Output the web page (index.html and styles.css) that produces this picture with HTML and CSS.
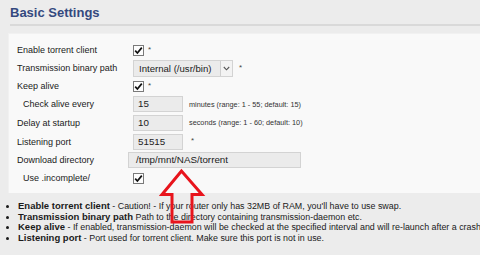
FILE: index.html
```html
<!DOCTYPE html>
<html>
<head>
<meta charset="utf-8">
<link rel="stylesheet" href="styles.css">
</head>
<body>
<div class="page">
  <h1 class="title">Basic Settings</h1>
  <div class="rule"></div>
  <div class="panel">
    <div class="form">
      <div class="label">Enable torrent client</div>
      <div class="field"><span class="chk"><svg viewBox="0 0 9 9" width="9" height="9"><path d="M1.2 4.6 L3.4 7 L7.8 1.6" fill="none" stroke="#111" stroke-width="1.7"/></svg></span><span class="req">*</span></div>

      <div class="label">Transmission binary path</div>
      <div class="field"><span class="select"><span class="select-text">Internal (/usr/bin)</span><span class="select-btn"><svg viewBox="0 0 7 5" width="7" height="5"><path d="M0.8 1 L3.5 3.8 L6.2 1" fill="none" stroke="#555" stroke-width="1.1"/></svg></span></span><span class="req">*</span></div>

      <div class="label">Keep alive</div>
      <div class="field"><span class="chk"><svg viewBox="0 0 9 9" width="9" height="9"><path d="M1.2 4.6 L3.4 7 L7.8 1.6" fill="none" stroke="#111" stroke-width="1.7"/></svg></span><span class="req">*</span></div>

      <div class="label sub">Check alive every</div>
      <div class="field"><span class="input short">15</span><span class="hint">minutes (range: 1 - 55; default: 15)</span></div>

      <div class="label">Delay at startup</div>
      <div class="field"><span class="input short">10</span><span class="hint">seconds (range: 1 - 60; default: 10)</span></div>

      <div class="label">Listening port</div>
      <div class="field"><span class="input short">51515</span><span class="req">*</span></div>

      <div class="label">Download directory</div>
      <div class="field"><span class="input long">/tmp/mnt/NAS/torrent</span></div>

      <div class="label sub">Use .incomplete/</div>
      <div class="field"><span class="chk"><svg viewBox="0 0 9 9" width="9" height="9"><path d="M1.2 4.6 L3.4 7 L7.8 1.6" fill="none" stroke="#111" stroke-width="1.7"/></svg></span></div>
    </div>
  </div>
  <ul class="notes">
    <li><b>Enable torrent client</b> - Caution! - If your router only has 32MB of RAM, you'll have to use swap.</li>
    <li><b>Transmission binary path</b> Path to the directory containing transmission-daemon etc.</li>
    <li><b>Keep alive</b> - If enabled, transmission-daemon will be checked at the specified interval and will re-launch after a crash.</li>
    <li><b>Listening port</b> - Port used for torrent client. Make sure this port is not in use.</li>
  </ul>
  <svg class="arrow" width="480" height="255" viewBox="0 0 480 255"><path d="M181.5 171 L162 194.5 L172 194.5 L172 222 L192 222 L192 194.5 L202 194.5 Z" fill="none" stroke="#e8141c" stroke-width="3" stroke-linejoin="miter"/></svg>
</div>
</body>
</html>
```
FILE: styles.css
```css
html, body {
  margin: 0;
  padding: 0;
  background: #ececec;
  overflow: hidden;
}
body {
  width: 480px;
  height: 255px;
  font-family: "Liberation Sans", Arial, sans-serif;
  color: #1a1a1a;
}
.page {
  position: relative;
  width: 480px;
  height: 255px;
}
.title {
  margin: 0;
  padding: 5px 0 0 10px;
  font-size: 13px;
  line-height: 15px;
  font-weight: bold;
  color: #34497f;
}
.rule {
  margin: 4px 0 0 10px;
  height: 2px;
  background: #d9d9d9;
}
.panel {
  margin: 7px 0 0 8px;
  background: #f9f9f9;
  border-top: 1px solid #f1f1f1;
  border-left: 1px solid #f1f1f1;
  padding: 7px 0 6px 8px;
}
.form {
  display: grid;
  grid-template-columns: 116px 1fr;
  grid-template-rows: 18px 18px 18px 18px 19px 19px 18px 18px;
}
.label {
  display: flex;
  align-items: center;
  font-size: 9px;
  color: #1a1a1a;
}
.label.sub {
  padding-left: 6px;
}
.field {
  display: flex;
  align-items: center;
}
.chk {
  width: 9px;
  height: 9px;
  border: 1px solid #7a7a7a;
  background: #fdfdfd;
  display: flex;
  align-items: center;
  justify-content: center;
}
.chk svg {
  display: block;
}
.req {
  font-size: 8px;
  color: #444;
  margin-left: 4px;
  position: relative;
  top: -1px;
}
.select {
  display: flex;
  width: 98px;
  height: 15px;
  border: 1px solid #d3d3d3;
  background: #ebebeb;
  box-sizing: content-box;
}
.select-text {
  flex: 1;
  font-size: 9.6px;
  line-height: 15px;
  padding-left: 5px;
  color: #222;
}
.select-btn {
  width: 11px;
  border-left: 1px solid #cfcfcf;
  background: #f3f3f3;
  display: flex;
  align-items: center;
  justify-content: center;
}
.select + .req {
  margin-left: 6px;
}
.input {
  display: block;
  height: 14px;
  line-height: 14px;
  border: 1px solid #d3d3d3;
  background: #ebebeb;
  font-size: 9.8px;
  color: #222;
  padding-left: 4px;
}
.input.short {
  width: 44px;
}
.input.long {
  margin-left: -5px;
  width: 164px;
  padding-left: 7px;
}
.input + .req {
  margin-left: 8px;
}
.hint {
  font-size: 7.3px;
  color: #333;
  margin-left: 6px;
}
.notes {
  margin: 8px 0 0 0;
  padding: 0 0 0 18px;
  font-size: 8.9px;
  line-height: 10.7px;
  white-space: nowrap;
  color: #1a1a1a;
}
.notes b {
  font-size: 9.5px;
}
.notes li {
  list-style: disc;
}
.arrow {
  position: absolute;
  left: 0;
  top: 0;
  pointer-events: none;
}
```
